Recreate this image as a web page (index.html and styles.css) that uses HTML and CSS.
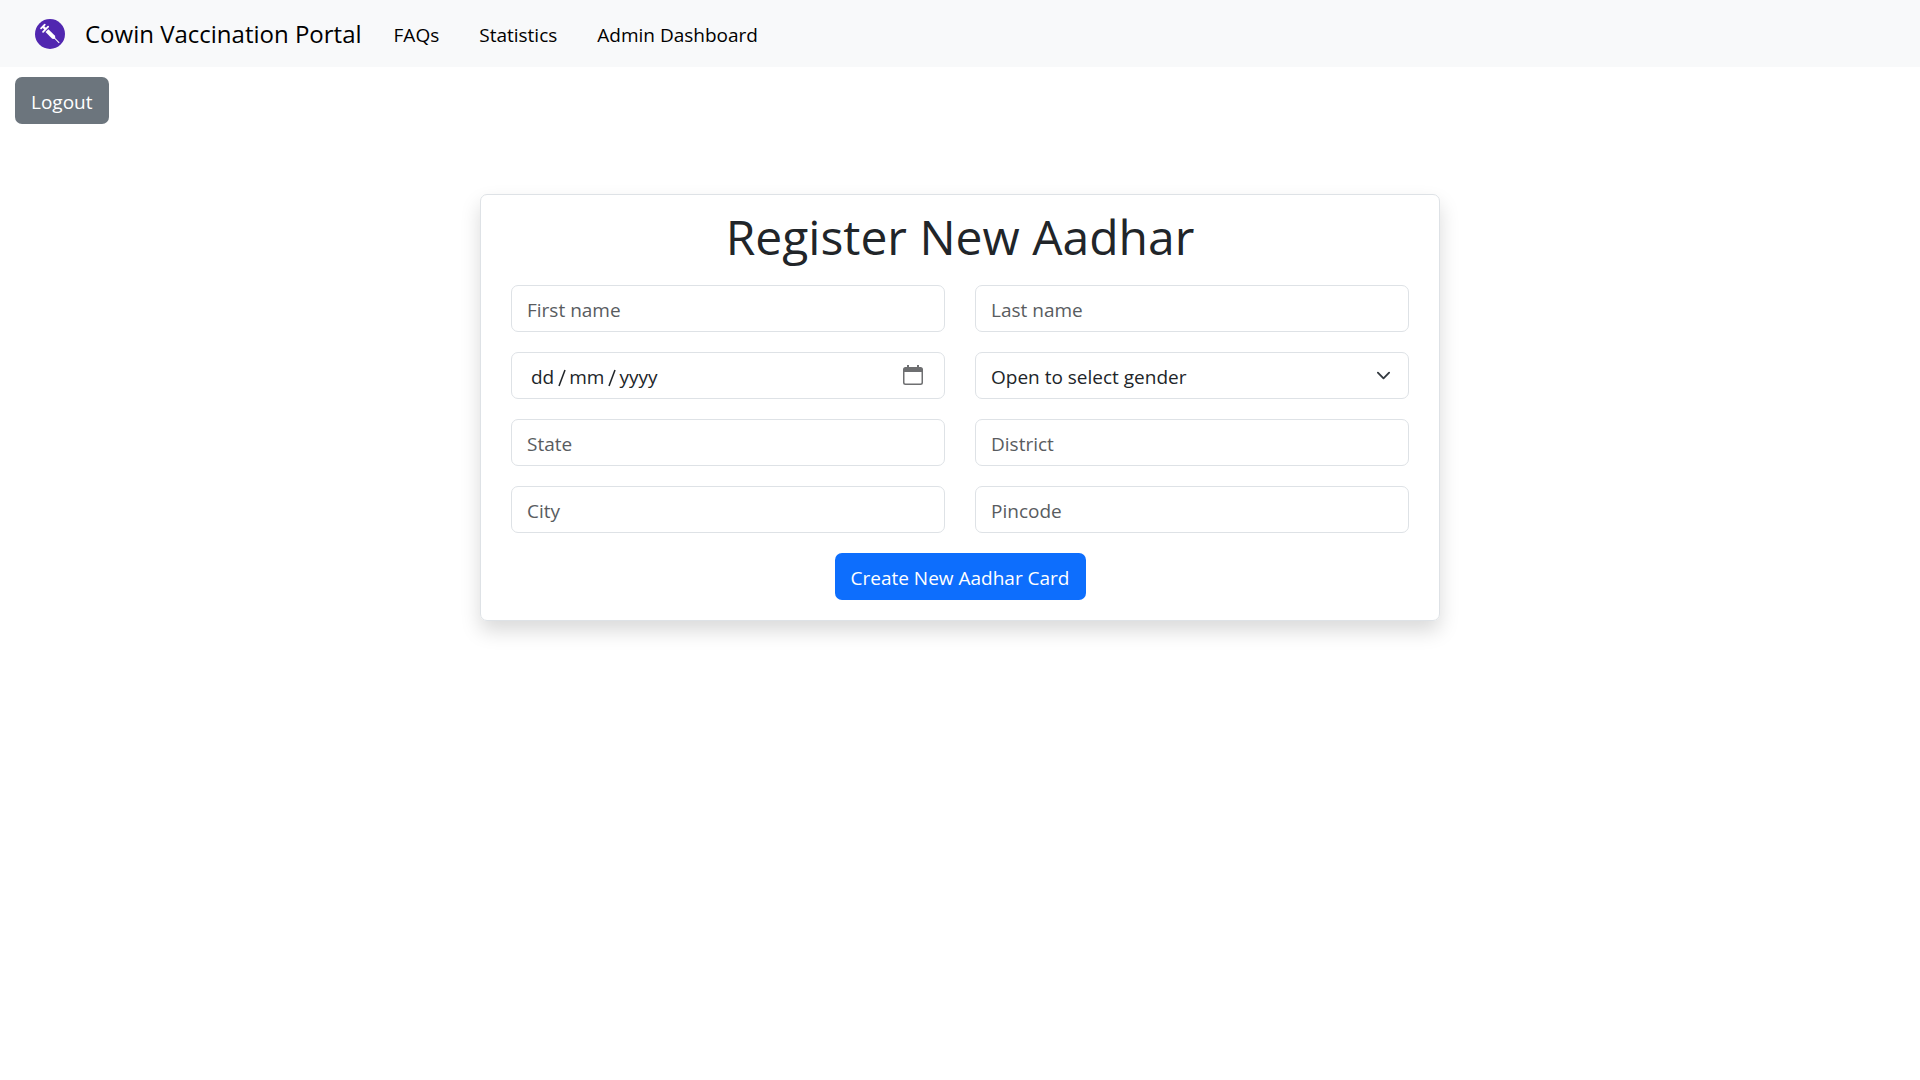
FILE: index.html
```html
<!DOCTYPE html>
<html lang="en-GB">
<head>
  <meta charset="utf-8">
  <meta name="viewport" content="width=device-width, initial-scale=1">
  <title>Cowin Vaccination Portal</title>
  <link rel="stylesheet" href="styles.css">
</head>
<body>
  <header class="navbar">
    <a class="brand" href="#">
      <svg class="brand-logo" viewBox="0 0 30 30" aria-hidden="true">
        <circle cx="15" cy="15" r="15" fill="#5127b0"/>
        <g transform="translate(4.8 9.4) rotate(-45)" fill="#fff">
          <rect x="0" y="0" width="7" height="1.8" rx=".9"/>
          <rect x="2.300" y="1" width="2.400" height="4"/>
          <rect x="-1" y="3.800" width="9" height="1.800" rx=".9"/>
          <path d="M1.500 6.600h4v9.400l-1.200 1.600H2.700l-1.200-1.600z"/>
          <rect x="3" y="17" width="1" height="7"/>
        </g>
      </svg>
      <span>Cowin Vaccination Portal</span>
    </a>
    <nav class="nav-links" aria-label="Main">
      <a class="nav-link" href="#">FAQs</a>
      <a class="nav-link" href="#">Statistics</a>
      <a class="nav-link" href="#">Admin Dashboard</a>
    </nav>
  </header>

  <div class="toolbar">
    <button class="btn btn-secondary" type="button">Logout</button>
  </div>

  <main class="card">
    <h1 class="card-title">Register New Aadhar</h1>
    <form class="form">
      <div class="form-grid">
        <input class="control" type="text" placeholder="First name" aria-label="First name">
        <input class="control" type="text" placeholder="Last name" aria-label="Last name">
        <input class="control control-date" type="date" aria-label="Date of birth">
        <select class="control control-select" aria-label="Gender">
          <option>Open to select gender</option>
          <option>Male</option>
          <option>Female</option>
          <option>Other</option>
        </select>
        <input class="control" type="text" placeholder="State" aria-label="State">
        <input class="control" type="text" placeholder="District" aria-label="District">
        <input class="control" type="text" placeholder="City" aria-label="City">
        <input class="control" type="text" placeholder="Pincode" aria-label="Pincode">
      </div>
      <button class="btn btn-primary" type="submit">Create New Aadhar Card</button>
    </form>
  </main>
</body>
</html>
```
FILE: styles.css
```css
*,
*::before,
*::after {
  box-sizing: border-box;
}

body {
  margin: 0;
  background: #fff;
  color: #212529;
  font-family: "Segoe UI", "Open Sans", "Noto Sans", sans-serif;
  font-size: 19px;
  line-height: 30px;
}

.navbar {
  display: flex;
  align-items: center;
  gap: 12px;
  min-height: 67px;
  padding: 0 35px;
  background: #f8f9fa;
}

.brand {
  display: flex;
  align-items: center;
  gap: 20px;
  color: #000;
  font-size: 24px;
  text-decoration: none;
}

.brand-logo {
  width: 30px;
  height: 30px;
}

.nav-links {
  display: flex;
  align-items: center;
}

.nav-link {
  padding: 2px 20px 0;
  color: #000;
  text-decoration: none;
}

.toolbar {
  padding: 10px 15px;
}

.btn {
  padding: 9px 15px 6px;
  border: 1px solid transparent;
  border-radius: 7px;
  color: #fff;
  font: inherit;
  cursor: pointer;
}

.btn-secondary {
  background: #6c757d;
}

.btn-primary {
  background: #0d6efd;
}

.card {
  width: 50%;
  margin: 60px auto;
  padding: 12px 30px 20px;
  border: 1px solid #dee2e6;
  border-radius: 7px;
  box-shadow: 0 10px 20px rgba(0, 0, 0, 0.15);
}

.card-title {
  margin: 0 0 18px;
  font-size: 48px;
  font-weight: 400;
  line-height: 60px;
  text-align: center;
}

.form {
  display: flex;
  flex-direction: column;
  align-items: center;
  gap: 20px;
}

.form-grid {
  display: grid;
  grid-template-columns: 1fr 1fr;
  gap: 20px 30px;
  width: 100%;
}

.control {
  width: 100%;
  min-width: 0;
  height: 47px;
  padding: 9px 15px 6px;
  border: 1px solid #dee2e6;
  border-radius: 7px;
  background: #fff;
  color: #212529;
  font: inherit;
  appearance: none;
}

.control::placeholder {
  color: #595c5f;
  opacity: 1;
}

.control-select {
  padding-right: 45px;
  background: #fff url("data:image/svg+xml,%3Csvg xmlns='http://www.w3.org/2000/svg' viewBox='0 0 16 16'%3E%3Cpath fill='none' stroke='%23343a40' stroke-linecap='round' stroke-linejoin='round' stroke-width='2' d='m2 5 6 6 6-6'/%3E%3C/svg%3E") no-repeat right 17px center / 15px 15px;
}

/* The date fields read day, month, year, with a drawn slash between them. */
.control-date::-webkit-datetime-edit {
  padding: 0;
}

.control-date::-webkit-datetime-edit-fields-wrapper {
  display: flex;
  padding: 0 2px;
}

.control-date::-webkit-datetime-edit-text {
  display: none;
}

.control-date::-webkit-datetime-edit-day-field {
  order: 1;
  padding: 0 2px;
}

.control-date::-webkit-datetime-edit-month-field,
.control-date::-webkit-datetime-edit-year-field {
  padding: 0 2px 0 13px;
  background: url("data:image/svg+xml,%3Csvg xmlns='http://www.w3.org/2000/svg' viewBox='0 0 8 18'%3E%3Cpath fill='none' stroke='%23212529' stroke-width='1.5' d='M7 1 1 17'/%3E%3C/svg%3E") no-repeat 2px 7px / 8px 18px;
}

.control-date::-webkit-datetime-edit-month-field {
  order: 2;
}

.control-date::-webkit-datetime-edit-year-field {
  order: 3;
}

.control-date::-webkit-calendar-picker-indicator {
  width: 20px;
  height: 20px;
  margin: 0 6px 4px 0;
  padding: 0;
  background: url("data:image/svg+xml,%3Csvg xmlns='http://www.w3.org/2000/svg' viewBox='0 0 20 20'%3E%3Cpath fill='%236e6f71' fill-rule='evenodd' d='M4 0h2v2h8V0h2v2h1.500a2.500 2.500 0 0 1 2.500 2.500v13a2.500 2.500 0 0 1-2.500 2.500h-15A2.500 2.500 0 0 1 0 17.500v-13A2.500 2.500 0 0 1 2.500 2H4zM1.500 7v10.500a1 1 0 0 0 1 1h15a1 1 0 0 0 1-1V7z'/%3E%3C/svg%3E") no-repeat center / 20px 20px;
}
```
